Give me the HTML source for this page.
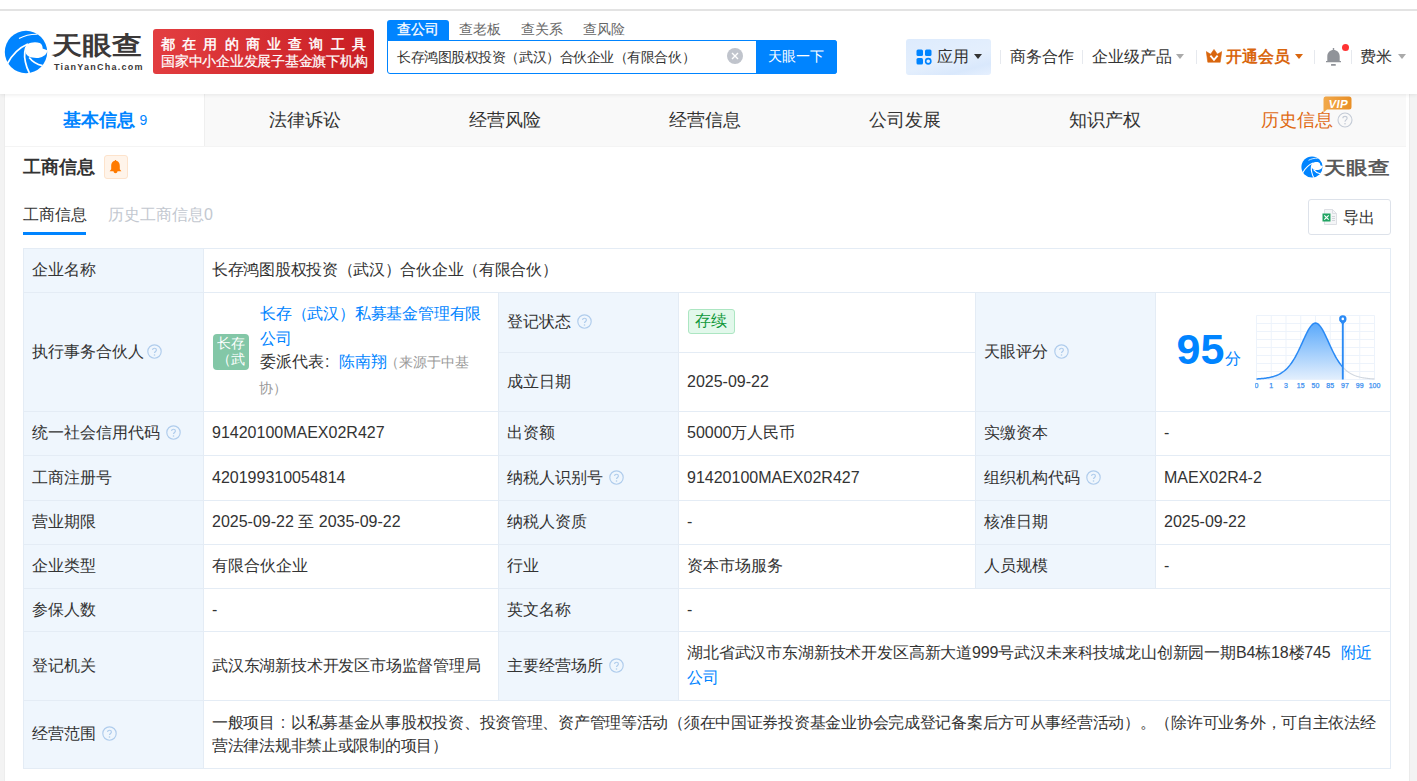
<!DOCTYPE html>
<html><head><meta charset="utf-8">
<style>
*{box-sizing:border-box;margin:0;padding:0}
html,body{width:1417px;height:781px;overflow:hidden;background:#f3f3f3;font-family:"Liberation Sans",sans-serif;color:#333}
.a{position:absolute;white-space:nowrap}
#hdr{position:absolute;left:0;top:0;width:1417px;height:94px;background:#fff;box-shadow:0 1px 4px rgba(0,0,0,.08);z-index:2}
#topline{position:absolute;left:0;top:9px;width:1417px;height:2px;background:#e3e3e3}
#main{position:absolute;left:5px;top:94px;width:1404px;height:687px;background:#fff;box-shadow:-1px 0 0 #ededed,1px 0 0 #ebebeb}
#tabs{position:absolute;left:0;top:0;width:1401px;height:52px;background:#f9f9f9;box-shadow:0 1px 0 #f4f4f4}
.tab{position:absolute;top:0;height:52px;width:200px;text-align:center;line-height:52px;font-size:18px;color:#333}
.cell{position:absolute;border-right:1px solid #e4ecf5;border-bottom:1px solid #e4ecf5}
.lab{background:#eff6fd}
.t16{font-size:16px}
.help{display:inline-block;width:14px;height:14px;border:1px solid #b9cde3;border-radius:50%;color:#b9cde3;font-size:11px;line-height:12px;text-align:center;vertical-align:middle}
</style></head><body>
<div id="hdr">
  <div id="topline"></div>
  <svg class="a" style="left:2px;top:28px" width="48" height="48" viewBox="0 0 48 48">
    <circle cx="24" cy="24" r="21.2" fill="#0084ff"/>
    <path d="M25.8 16 C 28.5 14.2 34 13.4 37.8 15.1 C 40 16.2 40.8 18.5 40.6 20.6 L 45.8 22.4 C 44.8 25 43.5 27 41.5 28 C 39.5 29.5 37 30 34.5 30 C 31.5 30 29 29.5 27.2 28.8 C 24 27 22.8 24 23.2 21.5 C 23.6 19 24.5 17.2 25.8 16 Z" fill="#fff"/>
    <path d="M17 10.6 C 22 7.8 29 6.2 35.5 6.3" stroke="#fff" stroke-width="1.1" fill="none"/>
    <path d="M5.5 35.5 C 10 27 16.5 20 25.8 16" stroke="#fff" stroke-width="1.7" fill="none"/>
    <path d="M25.8 16 C 22.5 21 22 28 23.4 34 C 24.2 38 25.5 41.5 27.4 45" stroke="#fff" stroke-width="1.7" fill="none"/>
    <path d="M27.2 29.4 C 29.5 32.5 33.5 36 40.5 37.6" stroke="#fff" stroke-width="1.7" fill="none"/>
  </svg>
  <div class="a" id="logotxt" style="left:52px;top:27px;font-size:29px;font-weight:bold;color:#3b3838;line-height:34px;letter-spacing:0px;transform-origin:0 30px;transform:scale(1.035,0.86)">天眼查</div>
  <div class="a" style="left:54px;top:61.5px;font-size:9px;font-weight:bold;color:#3b3838;line-height:11px;letter-spacing:1.25px">TianYanCha.com</div>
  <div class="a" style="left:153px;top:29px;width:221px;height:45px;border-radius:3px;background:linear-gradient(100deg,#e33e41,#c81d22)"></div>
  <div class="a" style="left:161px;top:34.5px;font-size:14px;color:#fff;line-height:18px;letter-spacing:7.2px;-webkit-text-stroke:0.45px #fff">都在用的商业查询工具</div>
  <div class="a" style="left:161px;top:52px;font-size:14px;color:#fff;line-height:18px;letter-spacing:-0.25px;-webkit-text-stroke:0.2px #fff">国家中小企业发展子基金旗下机构</div>

  <div class="a" style="left:387px;top:20px;width:62px;height:21px;background:#0084ff;border-radius:3px 3px 0 0"></div>
  <div class="a" style="left:397px;top:20px;font-size:14px;color:#fff;line-height:19px;-webkit-text-stroke:0.3px #fff">查公司</div>
  <div class="a" style="left:459px;top:20px;font-size:14px;color:#666;line-height:19px">查老板</div>
  <div class="a" style="left:521px;top:20px;font-size:14px;color:#666;line-height:19px">查关系</div>
  <div class="a" style="left:583px;top:20px;font-size:14px;color:#666;line-height:19px">查风险</div>
  <div class="a" style="left:387px;top:40px;width:450px;height:34px;border:1px solid #0084ff;border-radius:0 3px 3px 3px;background:#fff"></div>
  <div class="a" style="left:397px;top:47px;font-size:14px;color:#333;line-height:20px;letter-spacing:-0.45px">长存鸿图股权投资（武汉）合伙企业（有限合伙）</div>
  <div class="a" style="left:727px;top:48px;width:16px;height:16px;border-radius:50%;background:#c0c4cc"></div>
  <svg class="a" style="left:727px;top:48px" width="16" height="16" viewBox="0 0 16 16"><path d="M5 5 L11 11 M11 5 L5 11" stroke="#fff" stroke-width="1.4"/></svg>
  <div class="a" style="left:756px;top:40px;width:81px;height:34px;background:#0084ff;border-radius:0 3px 3px 0"></div>
  <div class="a" style="left:768px;top:46px;font-size:14px;color:#fff;line-height:20px">天眼一下</div>

  <div class="a" style="left:906px;top:39px;width:85px;height:36px;border-radius:3px;background:linear-gradient(165deg,#ddebfd 0%,#e4effd 55%,#d9e8fc 80%,#e6f0fe 100%)"></div>
  <svg class="a" style="left:916px;top:49px" width="16" height="16" viewBox="0 0 16 16"><rect x="0.5" y="0.5" width="6.5" height="6.5" rx="1.5" fill="#0084ff"/><rect x="9" y="0.5" width="6.5" height="6.5" rx="1.5" fill="#0084ff"/><rect x="0.5" y="9" width="6.5" height="6.5" rx="1.5" fill="#0084ff"/><circle cx="12.25" cy="12.25" r="2.6" fill="none" stroke="#0084ff" stroke-width="1.6"/></svg>
  <div class="a" style="left:937px;top:46px;font-size:16px;color:#333;line-height:22px">应用</div>
  <svg class="a" style="left:974px;top:54px" width="8" height="5" viewBox="0 0 8 5"><path d="M0 0 L8 0 L4 5 Z" fill="#333"/></svg>
  <div class="a" style="left:1000px;top:50px;width:1px;height:14px;background:#e6e9ee"></div>
  <div class="a" style="left:1010px;top:46px;font-size:16px;color:#333;line-height:22px">商务合作</div>
  <div class="a" style="left:1082px;top:50px;width:1px;height:14px;background:#e6e9ee"></div>
  <div class="a" style="left:1092px;top:46px;font-size:16px;color:#333;line-height:22px">企业级产品</div>
  <svg class="a" style="left:1176px;top:54px" width="8" height="5" viewBox="0 0 8 5"><path d="M0 0 L8 0 L4 5 Z" fill="#aaa"/></svg>
  <div class="a" style="left:1196px;top:50px;width:1px;height:14px;background:#e6e9ee"></div>
  <svg class="a" style="left:1206px;top:49px" width="16" height="14" viewBox="0 0 16 14"><path d="M0.3 2.6 L4.6 5.2 L8 0.4 L11.4 5.2 L15.7 2.6 L14.2 13.2 L1.8 13.2 Z" fill="#d9660e" stroke="#d9660e" stroke-width="0.6" stroke-linejoin="round"/><path d="M4.4 6.6 L8 10.8 L11.6 6.6" stroke="#fff" stroke-width="1.9" fill="none"/></svg>
  <div class="a" style="left:1226px;top:46px;font-size:16px;font-weight:bold;color:#d9660e;line-height:22px">开通会员</div>
  <svg class="a" style="left:1295px;top:54px" width="8" height="5" viewBox="0 0 8 5"><path d="M0 0 L8 0 L4 5 Z" fill="#d9660e"/></svg>
  <div class="a" style="left:1314px;top:50px;width:1px;height:14px;background:#e6e9ee"></div>
  <svg class="a" style="left:1326px;top:48px" width="15" height="18" viewBox="0 0 15 18"><rect x="6.8" y="0" width="1.4" height="3" fill="#909399"/><path d="M1.3 13 L1.3 8.4 C1.3 4.6 4 2 7.5 2 C11 2 13.7 4.6 13.7 8.4 L13.7 13 L15 13 L15 14.3 L0 14.3 L0 13 Z" fill="#909399"/><rect x="5" y="16" width="4.8" height="1.8" rx="0.5" fill="#909399"/></svg>
  <div class="a" style="left:1342.2px;top:43.5px;width:7px;height:7px;border-radius:50%;background:#ff3333"></div>
  <div class="a" style="left:1351px;top:50px;width:1px;height:14px;background:#e6e9ee"></div>
  <div class="a" style="left:1360px;top:46px;font-size:16px;color:#333;line-height:22px">费米</div>
  <svg class="a" style="left:1398px;top:54px" width="8" height="5" viewBox="0 0 8 5"><path d="M0 0 L8 0 L4 5 Z" fill="#aaa"/></svg>
</div>
<div id="main">
  <div id="tabs">
    <div class="tab" style="left:0;width:199px;background:#fff;color:#0084ff;font-weight:bold;text-indent:1px;box-shadow:1px 0 0 #efefef">基本信息<span style="font-weight:normal;font-size:14px;margin-left:5px;position:relative;top:-1px">9</span></div>
    <div class="tab" style="left:200px">法律诉讼</div>
    <div class="tab" style="left:400px">经营风险</div>
    <div class="tab" style="left:600px">经营信息</div>
    <div class="tab" style="left:800px">公司发展</div>
    <div class="tab" style="left:1000px">知识产权</div>
    <div class="tab" style="left:1200px;color:#df6a14;text-indent:-17px">历史信息</div>
    <svg class="a" style="left:1331.5px;top:17.5px" width="16" height="16" viewBox="0 0 16 16"><circle cx="8" cy="8" r="7" fill="none" stroke="#c4cbd6" stroke-width="1.1"/><path d="M5.9 6.2 C5.9 3.8 10.1 3.8 10.1 6.2 C10.1 7.9 8 7.9 8 9.7" fill="none" stroke="#c4cbd6" stroke-width="1.1"/><circle cx="8" cy="11.8" r="0.8" fill="#c4cbd6"/></svg>
    <svg class="a" style="left:1317.5px;top:1.7px" width="29" height="18" viewBox="0 0 29 18"><defs><linearGradient id="vg" x1="0" y1="0" x2="1" y2="0"><stop offset="0" stop-color="#f2a94a"/><stop offset="1" stop-color="#e98f26"/></linearGradient></defs><path d="M2.5 0.5 H26 Q28.5 0.5 28.5 3 V11 Q28.5 13.5 26 13.5 H4 L0.5 16.5 V3 Q0.5 0.5 2.5 0.5 Z" fill="url(#vg)"/><text x="15" y="11.6" font-family="Liberation Sans" font-weight="bold" font-size="11.5" letter-spacing="0.3" fill="#fff" text-anchor="middle" transform="skewX(-10) translate(1.8 0)">VIP</text></svg>
  </div>
</div>

<div class="a" style="left:23px;top:155px;font-size:18px;font-weight:bold;color:#333;line-height:24px">工商信息</div>
<div class="a" style="left:104px;top:155px;width:24px;height:24px;border:1px solid #fde3cc;background:#fff4ea;border-radius:3px"></div>
<svg class="a" style="left:109px;top:160px" width="13" height="14" viewBox="0 0 13 14"><path d="M6.5 0.8 C 3.3 0.8 2.2 3.4 2.2 6 L 2.2 9.2 L 0.6 11.2 L 12.4 11.2 L 10.8 9.2 L 10.8 6 C 10.8 3.4 9.7 0.8 6.5 0.8 Z" fill="#ff7a00"/><path d="M4.5 11 C4.5 14 8.5 14 8.5 11 Z" fill="#ff7a00"/><rect x="6" y="0" width="1" height="1.6" fill="#ff7a00"/></svg>
<svg class="a" style="left:1300px;top:155px" width="24" height="24" viewBox="0 0 48 48">
    <circle cx="24" cy="24" r="21.2" fill="#0084ff"/>
    <path d="M25.8 16 C 28.5 14.2 34 13.4 37.8 15.1 C 40 16.2 40.8 18.5 40.6 20.6 L 45.8 22.4 C 44.8 25 43.5 27 41.5 28 C 39.5 29.5 37 30 34.5 30 C 31.5 30 29 29.5 27.2 28.8 C 24 27 22.8 24 23.2 21.5 C 23.6 19 24.5 17.2 25.8 16 Z" fill="#fff"/>
    <path d="M17 10.6 C 22 7.8 29 6.2 35.5 6.3" stroke="#fff" stroke-width="1.6" fill="none"/>
    <path d="M5.5 35.5 C 10 27 16.5 20 25.8 16" stroke="#fff" stroke-width="2.2" fill="none"/>
    <path d="M25.8 16 C 22.5 21 22 28 23.4 34 C 24.2 38 25.5 41.5 27.4 45" stroke="#fff" stroke-width="2.2" fill="none"/>
    <path d="M27.2 29.4 C 29.5 32.5 33.5 36 40.5 37.6" stroke="#fff" stroke-width="2.2" fill="none"/>
  </svg>
<div class="a" style="left:1324px;top:154px;font-size:21px;font-weight:bold;color:#5a5a5a;line-height:26px;transform-origin:0 22px;transform:scale(1.04,0.86)">天眼查</div>
<div class="a" style="left:23px;top:204px;font-size:16px;color:#333;line-height:22px">工商信息</div>
<div class="a" style="left:23px;top:232px;width:63px;height:3px;background:#0084ff"></div>
<div class="a" style="left:108px;top:204px;font-size:16px;color:#c3c8d0;line-height:22px">历史工商信息0</div>
<div class="a" style="left:1308px;top:199px;width:83px;height:36px;border:1px solid #dde2ea;border-radius:3px;background:#fff"></div>
<svg class="a" style="left:1322px;top:209px" width="16" height="16" viewBox="0 0 16 16"><path d="M2.5 0.5 L10.5 0.5 L14.5 4.5 L14.5 15.5 L2.5 15.5 Z" fill="#f4f5f7" stroke="#d5d8de" stroke-width="0.8"/><path d="M10.5 0.5 L10.5 4.5 L14.5 4.5" fill="none" stroke="#d5d8de" stroke-width="0.8"/><rect x="0.5" y="4.5" width="8" height="8" fill="#21a462"/><path d="M2.3 6.3 L6.7 10.7 M6.7 6.3 L2.3 10.7" stroke="#fff" stroke-width="1.2"/><path d="M10 7.5 H13 M10 9.5 H13 M10 11.5 H13" stroke="#c9ccd2" stroke-width="0.8"/></svg>
<div class="a" style="left:1343px;top:207px;font-size:16px;color:#333;line-height:22px">导出</div>

<div id="tbl"><div class="a" style="left:23px;top:248px;width:180px;height:520px;background:#eff6fd"></div>
<div class="a" style="left:498px;top:292px;width:180px;height:408px;background:#eff6fd"></div>
<div class="a" style="left:975px;top:292px;width:180px;height:296px;background:#eff6fd"></div>
<div class="a" style="left:23px;top:248px;width:1368px;height:1px;background:#e4ecf5"></div>
<div class="a" style="left:23px;top:292px;width:1368px;height:1px;background:#e4ecf5"></div>
<div class="a" style="left:23px;top:411px;width:1368px;height:1px;background:#e4ecf5"></div>
<div class="a" style="left:23px;top:455px;width:1368px;height:1px;background:#e4ecf5"></div>
<div class="a" style="left:23px;top:500px;width:1368px;height:1px;background:#e4ecf5"></div>
<div class="a" style="left:23px;top:544px;width:1368px;height:1px;background:#e4ecf5"></div>
<div class="a" style="left:23px;top:588px;width:1368px;height:1px;background:#e4ecf5"></div>
<div class="a" style="left:23px;top:631px;width:1368px;height:1px;background:#e4ecf5"></div>
<div class="a" style="left:23px;top:700px;width:1368px;height:1px;background:#e4ecf5"></div>
<div class="a" style="left:23px;top:768px;width:1368px;height:1px;background:#e4ecf5"></div>
<div class="a" style="left:498px;top:352px;width:477px;height:1px;background:#e4ecf5"></div>
<div class="a" style="left:23px;top:248px;width:1px;height:521px;background:#e4ecf5"></div>
<div class="a" style="left:1390px;top:248px;width:1px;height:521px;background:#e4ecf5"></div>
<div class="a" style="left:203px;top:248px;width:1px;height:521px;background:#e4ecf5"></div>
<div class="a" style="left:498px;top:292px;width:1px;height:409px;background:#e4ecf5"></div>
<div class="a" style="left:678px;top:292px;width:1px;height:409px;background:#e4ecf5"></div>
<div class="a" style="left:975px;top:292px;width:1px;height:297px;background:#e4ecf5"></div>
<div class="a" style="left:1155px;top:292px;width:1px;height:297px;background:#e4ecf5"></div>
<div class="a" style="left:32px;top:259.0px;font-size:16px;line-height:22px;color:#333;">企业名称</div>
<div class="a" style="left:212px;top:259.0px;font-size:16px;line-height:22px;color:#333;"><span style="letter-spacing:-0.3px">长存鸿图股权投资（武汉）合伙企业（有限合伙）</span></div>
<div class="a" style="left:32px;top:422.0px;font-size:16px;line-height:22px;color:#333;">统一社会信用代码<svg width="15" height="15" viewBox="0 0 15 15" style="vertical-align:-2px;margin-left:6px"><circle cx="7.5" cy="7.5" r="6.7" fill="none" stroke="#afccec" stroke-width="1.15"/><path d="M5.6 5.9 C5.6 3.7 9.4 3.7 9.4 5.9 C9.4 7.4 7.5 7.5 7.5 9.1" fill="none" stroke="#afccec" stroke-width="1.15"/><circle cx="7.5" cy="11" r="0.8" fill="#afccec"/></svg></div>
<div class="a" style="left:212px;top:422.0px;font-size:16px;line-height:22px;color:#333;">91420100MAEX02R427</div>
<div class="a" style="left:507px;top:422.0px;font-size:16px;line-height:22px;color:#333;">出资额</div>
<div class="a" style="left:687px;top:422.0px;font-size:16px;line-height:22px;color:#333;">50000万人民币</div>
<div class="a" style="left:984px;top:422.0px;font-size:16px;line-height:22px;color:#333;">实缴资本</div>
<div class="a" style="left:1164px;top:422.0px;font-size:16px;line-height:22px;color:#333;">-</div>
<div class="a" style="left:32px;top:466.5px;font-size:16px;line-height:22px;color:#333;">工商注册号</div>
<div class="a" style="left:212px;top:466.5px;font-size:16px;line-height:22px;color:#333;">420199310054814</div>
<div class="a" style="left:507px;top:466.5px;font-size:16px;line-height:22px;color:#333;">纳税人识别号<svg width="15" height="15" viewBox="0 0 15 15" style="vertical-align:-2px;margin-left:6px"><circle cx="7.5" cy="7.5" r="6.7" fill="none" stroke="#afccec" stroke-width="1.15"/><path d="M5.6 5.9 C5.6 3.7 9.4 3.7 9.4 5.9 C9.4 7.4 7.5 7.5 7.5 9.1" fill="none" stroke="#afccec" stroke-width="1.15"/><circle cx="7.5" cy="11" r="0.8" fill="#afccec"/></svg></div>
<div class="a" style="left:687px;top:466.5px;font-size:16px;line-height:22px;color:#333;">91420100MAEX02R427</div>
<div class="a" style="left:984px;top:466.5px;font-size:16px;line-height:22px;color:#333;">组织机构代码<svg width="15" height="15" viewBox="0 0 15 15" style="vertical-align:-2px;margin-left:6px"><circle cx="7.5" cy="7.5" r="6.7" fill="none" stroke="#afccec" stroke-width="1.15"/><path d="M5.6 5.9 C5.6 3.7 9.4 3.7 9.4 5.9 C9.4 7.4 7.5 7.5 7.5 9.1" fill="none" stroke="#afccec" stroke-width="1.15"/><circle cx="7.5" cy="11" r="0.8" fill="#afccec"/></svg></div>
<div class="a" style="left:1164px;top:466.5px;font-size:16px;line-height:22px;color:#333;">MAEX02R4-2</div>
<div class="a" style="left:32px;top:511.0px;font-size:16px;line-height:22px;color:#333;">营业期限</div>
<div class="a" style="left:212px;top:511.0px;font-size:16px;line-height:22px;color:#333;">2025-09-22 至 2035-09-22</div>
<div class="a" style="left:507px;top:511.0px;font-size:16px;line-height:22px;color:#333;">纳税人资质</div>
<div class="a" style="left:687px;top:511.0px;font-size:16px;line-height:22px;color:#333;">-</div>
<div class="a" style="left:984px;top:511.0px;font-size:16px;line-height:22px;color:#333;">核准日期</div>
<div class="a" style="left:1164px;top:511.0px;font-size:16px;line-height:22px;color:#333;">2025-09-22</div>
<div class="a" style="left:32px;top:555.0px;font-size:16px;line-height:22px;color:#333;">企业类型</div>
<div class="a" style="left:212px;top:555.0px;font-size:16px;line-height:22px;color:#333;">有限合伙企业</div>
<div class="a" style="left:507px;top:555.0px;font-size:16px;line-height:22px;color:#333;">行业</div>
<div class="a" style="left:687px;top:555.0px;font-size:16px;line-height:22px;color:#333;">资本市场服务</div>
<div class="a" style="left:984px;top:555.0px;font-size:16px;line-height:22px;color:#333;">人员规模</div>
<div class="a" style="left:1164px;top:555.0px;font-size:16px;line-height:22px;color:#333;">-</div>
<div class="a" style="left:32px;top:598.5px;font-size:16px;line-height:22px;color:#333;">参保人数</div>
<div class="a" style="left:212px;top:598.5px;font-size:16px;line-height:22px;color:#333;">-</div>
<div class="a" style="left:507px;top:598.5px;font-size:16px;line-height:22px;color:#333;">英文名称</div>
<div class="a" style="left:687px;top:598.5px;font-size:16px;line-height:22px;color:#333;">-</div>
<div class="a" style="left:32px;top:340.5px;font-size:16px;line-height:22px;color:#333;">执行事务合伙人<svg width="15" height="15" viewBox="0 0 15 15" style="vertical-align:-2px;margin-left:2.5px"><circle cx="7.5" cy="7.5" r="6.7" fill="none" stroke="#afccec" stroke-width="1.15"/><path d="M5.6 5.9 C5.6 3.7 9.4 3.7 9.4 5.9 C9.4 7.4 7.5 7.5 7.5 9.1" fill="none" stroke="#afccec" stroke-width="1.15"/><circle cx="7.5" cy="11" r="0.8" fill="#afccec"/></svg></div>
<div class="a" style="left:507px;top:311.0px;font-size:16px;line-height:22px;color:#333;">登记状态<svg width="15" height="15" viewBox="0 0 15 15" style="vertical-align:-2px;margin-left:6px"><circle cx="7.5" cy="7.5" r="6.7" fill="none" stroke="#afccec" stroke-width="1.15"/><path d="M5.6 5.9 C5.6 3.7 9.4 3.7 9.4 5.9 C9.4 7.4 7.5 7.5 7.5 9.1" fill="none" stroke="#afccec" stroke-width="1.15"/><circle cx="7.5" cy="11" r="0.8" fill="#afccec"/></svg></div>
<div class="a" style="left:507px;top:370.5px;font-size:16px;line-height:22px;color:#333;">成立日期</div>
<div class="a" style="left:687px;top:370.5px;font-size:16px;line-height:22px;color:#333;">2025-09-22</div>
<div class="a" style="left:984px;top:340.5px;font-size:16px;line-height:22px;color:#333;">天眼评分<svg width="15" height="15" viewBox="0 0 15 15" style="vertical-align:-2px;margin-left:6px"><circle cx="7.5" cy="7.5" r="6.7" fill="none" stroke="#afccec" stroke-width="1.15"/><path d="M5.6 5.9 C5.6 3.7 9.4 3.7 9.4 5.9 C9.4 7.4 7.5 7.5 7.5 9.1" fill="none" stroke="#afccec" stroke-width="1.15"/><circle cx="7.5" cy="11" r="0.8" fill="#afccec"/></svg></div>
<div class="a" style="left:32px;top:654.5px;font-size:16px;line-height:22px;color:#333;">登记机关</div>
<div class="a" style="left:212px;top:654.5px;font-size:16px;line-height:22px;color:#333;"><span style="letter-spacing:-0.2px">武汉东湖新技术开发区市场监督管理局</span></div>
<div class="a" style="left:507px;top:654.5px;font-size:16px;line-height:22px;color:#333;">主要经营场所<svg width="15" height="15" viewBox="0 0 15 15" style="vertical-align:-2px;margin-left:6px"><circle cx="7.5" cy="7.5" r="6.7" fill="none" stroke="#afccec" stroke-width="1.15"/><path d="M5.6 5.9 C5.6 3.7 9.4 3.7 9.4 5.9 C9.4 7.4 7.5 7.5 7.5 9.1" fill="none" stroke="#afccec" stroke-width="1.15"/><circle cx="7.5" cy="11" r="0.8" fill="#afccec"/></svg></div>
<div class="a" style="left:32px;top:723.0px;font-size:16px;line-height:22px;color:#333;">经营范围<svg width="15" height="15" viewBox="0 0 15 15" style="vertical-align:-2px;margin-left:6px"><circle cx="7.5" cy="7.5" r="6.7" fill="none" stroke="#afccec" stroke-width="1.15"/><path d="M5.6 5.9 C5.6 3.7 9.4 3.7 9.4 5.9 C9.4 7.4 7.5 7.5 7.5 9.1" fill="none" stroke="#afccec" stroke-width="1.15"/><circle cx="7.5" cy="11" r="0.8" fill="#afccec"/></svg></div>
<div class="a" style="left:213px;top:334px;width:36px;height:36px;border-radius:4px;background:#83c7a7;overflow:hidden"><div style="position:absolute;left:4px;top:1.5px;width:28px;height:33px;overflow:hidden;font-size:13.6px;line-height:16.3px;color:#fff;white-space:normal;word-break:break-all">长存（武汉）私募基金管理有限公司</div></div>
<div class="a" style="left:260px;top:301px;font-size:16px;line-height:25px;color:#0084ff;letter-spacing:-0.2px">长存（武汉）私募基金管理有限<br>公司</div>
<div class="a" style="left:260px;top:350.5px;font-size:16px;line-height:22px;color:#333">委派代表<span style="display:inline-block;width:16px;text-indent:1px">:</span><span style="color:#0084ff;margin-left:-1px">陈南翔</span></div>
<div class="a" style="left:385px;top:351.5px;font-size:13.6px;line-height:22px;color:#999">（来源于中基</div>
<div class="a" style="left:259px;top:377.5px;font-size:13.6px;line-height:22px;color:#999">协）</div>
<div class="a" style="left:688px;top:309px;width:47px;height:25px;border:1px solid #ace6c2;background:#e2f8eb;border-radius:3px"></div>
<div class="a" style="left:695px;top:310px;font-size:16px;line-height:22px;color:#12993c">存续</div>
<div class="a" style="left:1176.5px;top:324.5px;font-size:43px;font-weight:bold;line-height:48px;color:#0084ff">95</div>
<div class="a" style="left:1225px;top:347.5px;font-size:16px;line-height:22px;color:#0084ff">分</div>
<svg class="a" style="left:1255px;top:315px" width="126" height="78" viewBox="0 0 126 78">
<defs><linearGradient id="g1" x1="0" y1="0" x2="0" y2="1"><stop offset="0" stop-color="#5aa9fb"/><stop offset="1" stop-color="#e3effd"/></linearGradient></defs>
<line x1="1.50" y1="0.5" x2="1.50" y2="64.5" stroke="#edf3fb" stroke-width="1"/><line x1="16.25" y1="0.5" x2="16.25" y2="64.5" stroke="#edf3fb" stroke-width="1"/><line x1="31.00" y1="0.5" x2="31.00" y2="64.5" stroke="#edf3fb" stroke-width="1"/><line x1="45.75" y1="0.5" x2="45.75" y2="64.5" stroke="#edf3fb" stroke-width="1"/><line x1="60.50" y1="0.5" x2="60.50" y2="64.5" stroke="#edf3fb" stroke-width="1"/><line x1="75.25" y1="0.5" x2="75.25" y2="64.5" stroke="#edf3fb" stroke-width="1"/><line x1="90.00" y1="0.5" x2="90.00" y2="64.5" stroke="#edf3fb" stroke-width="1"/><line x1="104.75" y1="0.5" x2="104.75" y2="64.5" stroke="#edf3fb" stroke-width="1"/><line x1="119.50" y1="0.5" x2="119.50" y2="64.5" stroke="#edf3fb" stroke-width="1"/><line x1="1.5" y1="0.50" x2="119.5" y2="0.50" stroke="#edf3fb" stroke-width="1"/><line x1="1.5" y1="8.50" x2="119.5" y2="8.50" stroke="#edf3fb" stroke-width="1"/><line x1="1.5" y1="16.50" x2="119.5" y2="16.50" stroke="#edf3fb" stroke-width="1"/><line x1="1.5" y1="24.50" x2="119.5" y2="24.50" stroke="#edf3fb" stroke-width="1"/><line x1="1.5" y1="32.50" x2="119.5" y2="32.50" stroke="#edf3fb" stroke-width="1"/><line x1="1.5" y1="40.50" x2="119.5" y2="40.50" stroke="#edf3fb" stroke-width="1"/><line x1="1.5" y1="48.50" x2="119.5" y2="48.50" stroke="#edf3fb" stroke-width="1"/><line x1="1.5" y1="56.50" x2="119.5" y2="56.50" stroke="#edf3fb" stroke-width="1"/><line x1="1.5" y1="64.50" x2="119.5" y2="64.50" stroke="#edf3fb" stroke-width="1"/>
<path d="M1.50 63.95 L2.50 63.90 L3.50 63.83 L4.50 63.76 L5.50 63.68 L6.50 63.59 L7.50 63.50 L8.50 63.39 L9.50 63.27 L10.50 63.14 L11.50 63.00 L12.50 62.84 L13.50 62.67 L14.50 62.47 L15.50 62.26 L16.50 62.02 L17.50 61.76 L18.50 61.48 L19.50 61.16 L20.50 60.82 L21.50 60.44 L22.50 60.02 L23.50 59.56 L24.50 59.05 L25.50 58.50 L26.50 57.89 L27.50 57.23 L28.50 56.51 L29.50 55.72 L30.50 54.86 L31.50 53.93 L32.50 52.91 L33.50 51.82 L34.50 50.63 L35.50 49.36 L36.50 47.99 L37.50 46.52 L38.50 44.96 L39.50 43.30 L40.50 41.54 L41.50 39.69 L42.50 37.76 L43.50 35.74 L44.50 33.65 L45.50 31.51 L46.50 29.32 L47.50 27.11 L48.50 24.90 L49.50 22.71 L50.50 20.56 L51.50 18.50 L52.50 16.54 L53.50 14.72 L54.50 13.07 L55.50 11.62 L56.50 10.39 L57.50 9.40 L58.50 8.68 L59.50 8.25 L60.50 8.10 L61.50 8.25 L62.50 8.68 L63.50 9.40 L64.50 10.39 L65.50 11.62 L66.50 13.07 L67.50 14.72 L68.50 16.54 L69.50 18.50 L70.50 20.56 L71.50 22.71 L72.50 24.90 L73.50 27.11 L74.50 29.32 L75.50 31.51 L76.50 33.65 L77.50 35.74 L78.50 37.76 L79.50 39.69 L80.50 41.54 L81.50 43.30 L82.50 44.96 L83.50 46.52 L84.50 47.99 L85.50 49.36 L86.50 50.63 L87.50 51.82 L87.50 64.5 L1.5 64.5 Z" fill="url(#g1)"/>
<path d="M1.50 63.95 L2.50 63.90 L3.50 63.83 L4.50 63.76 L5.50 63.68 L6.50 63.59 L7.50 63.50 L8.50 63.39 L9.50 63.27 L10.50 63.14 L11.50 63.00 L12.50 62.84 L13.50 62.67 L14.50 62.47 L15.50 62.26 L16.50 62.02 L17.50 61.76 L18.50 61.48 L19.50 61.16 L20.50 60.82 L21.50 60.44 L22.50 60.02 L23.50 59.56 L24.50 59.05 L25.50 58.50 L26.50 57.89 L27.50 57.23 L28.50 56.51 L29.50 55.72 L30.50 54.86 L31.50 53.93 L32.50 52.91 L33.50 51.82 L34.50 50.63 L35.50 49.36 L36.50 47.99 L37.50 46.52 L38.50 44.96 L39.50 43.30 L40.50 41.54 L41.50 39.69 L42.50 37.76 L43.50 35.74 L44.50 33.65 L45.50 31.51 L46.50 29.32 L47.50 27.11 L48.50 24.90 L49.50 22.71 L50.50 20.56 L51.50 18.50 L52.50 16.54 L53.50 14.72 L54.50 13.07 L55.50 11.62 L56.50 10.39 L57.50 9.40 L58.50 8.68 L59.50 8.25 L60.50 8.10 L61.50 8.25 L62.50 8.68 L63.50 9.40 L64.50 10.39 L65.50 11.62 L66.50 13.07 L67.50 14.72 L68.50 16.54 L69.50 18.50 L70.50 20.56 L71.50 22.71 L72.50 24.90 L73.50 27.11 L74.50 29.32 L75.50 31.51 L76.50 33.65 L77.50 35.74 L78.50 37.76 L79.50 39.69 L80.50 41.54 L81.50 43.30 L82.50 44.96 L83.50 46.52 L84.50 47.99 L85.50 49.36 L86.50 50.63 L87.50 51.82" fill="none" stroke="#2a8af5" stroke-width="1.5"/>
<path d="M87.50 51.82 L88.50 52.91 L89.50 53.93 L90.50 54.86 L91.50 55.72 L92.50 56.51 L93.50 57.23 L94.50 57.89 L95.50 58.50 L96.50 59.05 L97.50 59.56 L98.50 60.02 L99.50 60.44 L100.50 60.82 L101.50 61.16 L102.50 61.48 L103.50 61.76 L104.50 62.02 L105.50 62.26 L106.50 62.47 L107.50 62.67 L108.50 62.84 L109.50 63.00 L110.50 63.14 L111.50 63.27 L112.50 63.39 L113.50 63.50 L114.50 63.59 L115.50 63.68 L116.50 63.76 L117.50 63.83 L118.50 63.90 L119.50 63.95" fill="none" stroke="#cfd6df" stroke-width="1.1"/>
<line x1="87.8" y1="6" x2="87.8" y2="64.5" stroke="#2a8af5" stroke-width="1.9"/>
<circle cx="87.8" cy="3.9" r="3.7" fill="#2a8af5"/><path d="M84.5 5.6 L91.1 5.6 L87.8 10 Z" fill="#2a8af5"/>
<circle cx="87.8" cy="3.9" r="1.3" fill="#fff"/>
<g font-family="Liberation Sans" font-size="7" fill="#3b8ff0" stroke="#3b8ff0" stroke-width="0.25" text-anchor="middle">
<text x="1.5" y="73">0</text><text x="16.25" y="73">1</text><text x="31" y="73">3</text><text x="45.75" y="73">15</text><text x="60.5" y="73">50</text><text x="75.25" y="73">85</text><text x="90" y="73">97</text><text x="104.75" y="73">99</text><text x="119.5" y="73">100</text>
</g></svg>
<div class="a" style="left:687px;top:639.5px;font-size:16px;line-height:25px;color:#333;letter-spacing:-0.16px">湖北省武汉市东湖新技术开发区高新大道999号武汉未来科技城龙山创新园一期B4栋18楼745<span style="color:#0084ff;margin-left:10px">附近</span><br><span style="color:#0084ff">公司</span></div>
<div class="a" style="left:212px;top:710.5px;font-size:16px;line-height:23px;color:#333;letter-spacing:-0.28px">一般项目<span style="display:inline-block;width:16px;text-align:center">:</span>以私募基金从事股权投资、投资管理、资产管理等活动（须在中国证券投资基金业协会完成登记备案后方可从事经营活动）。（除许可业务外，可自主依法经<br>营法律法规非禁止或限制的项目）</div></div><!--endtbl-->
</body></html>
